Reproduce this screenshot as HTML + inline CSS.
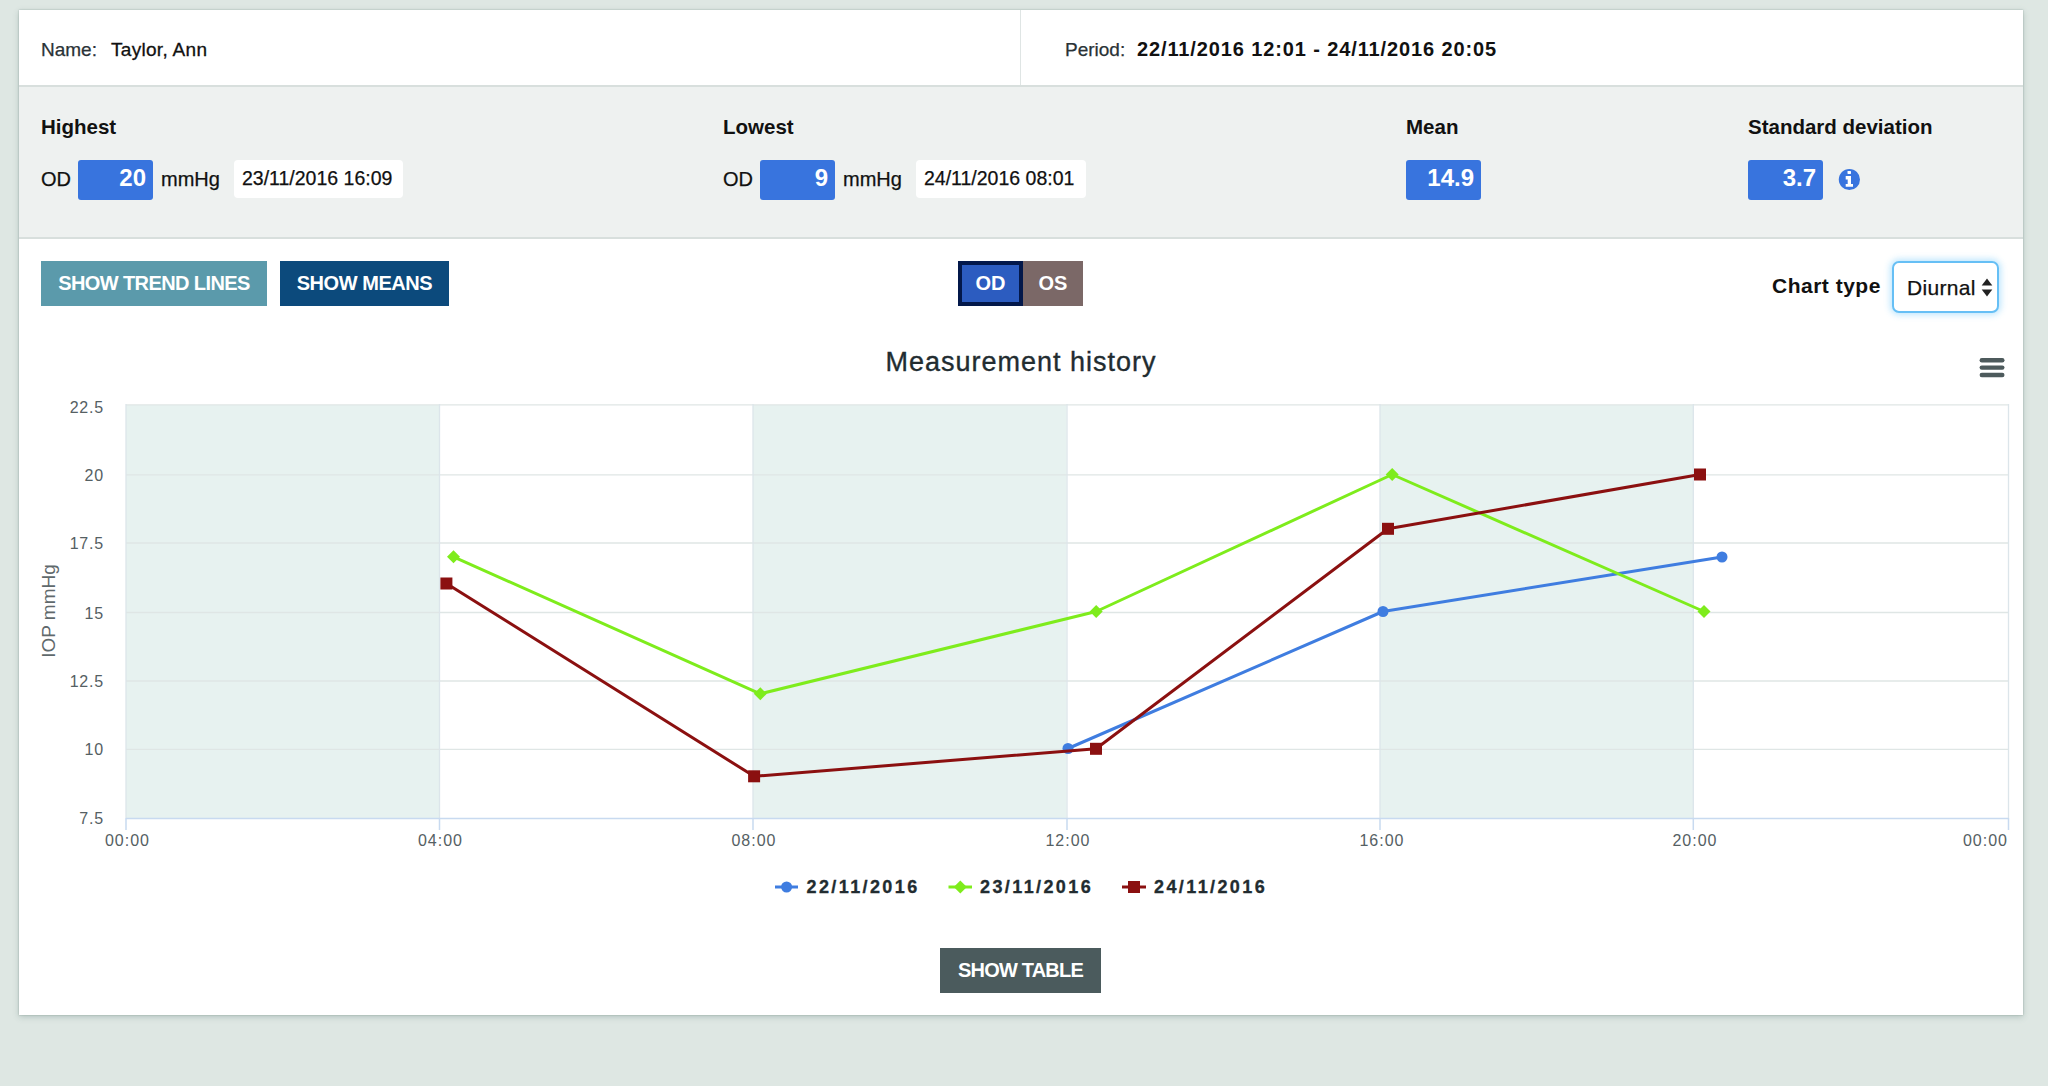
<!DOCTYPE html>
<html><head><meta charset="utf-8">
<style>
html,body{margin:0;padding:0}
body{width:2048px;height:1086px;overflow:hidden;background:#dee7e3;font-family:"Liberation Sans",sans-serif;position:relative}
.card{position:absolute;left:19px;top:10px;width:2004px;height:1005px;background:#fff;box-shadow:0 0 1.5px rgba(50,80,75,.35),0 2px 6px rgba(60,95,90,.25)}
.hdr{position:absolute;left:19px;top:10px;width:2004px;height:75px;background:#fff}
.vdiv{position:absolute;left:1020px;top:10px;width:1px;height:75px;background:#dfe5e4}
.stats{position:absolute;left:19px;top:85px;width:2004px;background:#eef1f0;border-top:2px solid #d8dfdd;border-bottom:2px solid #d8dfdd;box-sizing:border-box;height:154px}
.t{position:absolute;line-height:1;white-space:nowrap;-webkit-text-stroke:.25px currentColor}
.t[style*="bold"]{-webkit-text-stroke:0}
.vbox{position:absolute;background:#3874de;border-radius:3px;height:40px;width:75px}
.dbox{position:absolute;background:#fff;border-radius:4px;height:38.6px;margin-top:.6px}
.btn{position:absolute;height:45px;top:261px}
.w{color:#fff}
</style></head><body>
<div class="card"></div>
<div class="hdr"></div>
<div class="vdiv"></div>
<div class="stats"></div>

<!-- header -->
<div class="t" style="left:41px;top:40px;font-size:19px;color:#2a3236">Name:</div>
<div class="t" style="left:111px;top:40px;font-size:19px;color:#111;-webkit-text-stroke:.3px #111;letter-spacing:.3px">Taylor, Ann</div>
<div class="t" style="left:1065px;top:40px;font-size:19px;color:#2a3236">Period:</div>
<div class="t" style="left:1137px;top:38.8px;font-size:20px;font-weight:bold;color:#111;letter-spacing:.88px">22/11/2016 12:01 - 24/11/2016 20:05</div>

<!-- stats -->
<div class="t" style="left:41px;top:117px;font-size:20.5px;font-weight:bold;color:#111">Highest</div>
<div class="t" style="left:41px;top:169px;font-size:20px;color:#111">OD</div>
<div class="vbox" style="left:78px;top:160px"></div>
<div class="t w" style="left:78px;width:68px;text-align:right;top:165.5px;font-size:24px;font-weight:bold">20</div>
<div class="t" style="left:161px;top:169px;font-size:20px;color:#111">mmHg</div>
<div class="dbox" style="left:234px;top:159px;width:169px"></div>
<div class="t" style="left:242px;top:169.2px;font-size:19.5px;color:#111">23/11/2016 16:09</div>

<div class="t" style="left:723px;top:117px;font-size:20.5px;font-weight:bold;color:#111">Lowest</div>
<div class="t" style="left:723px;top:169px;font-size:20px;color:#111">OD</div>
<div class="vbox" style="left:760px;top:160px"></div>
<div class="t w" style="left:760px;width:68px;text-align:right;top:165.5px;font-size:24px;font-weight:bold">9</div>
<div class="t" style="left:843px;top:169px;font-size:20px;color:#111">mmHg</div>
<div class="dbox" style="left:916px;top:159px;width:170px"></div>
<div class="t" style="left:924px;top:169.2px;font-size:19.5px;color:#111">24/11/2016 08:01</div>

<div class="t" style="left:1406px;top:117px;font-size:20.5px;font-weight:bold;color:#111">Mean</div>
<div class="vbox" style="left:1406px;top:160px"></div>
<div class="t w" style="left:1406px;width:68px;text-align:right;top:165.5px;font-size:24px;font-weight:bold">14.9</div>

<div class="t" style="left:1748px;top:117px;font-size:20.5px;font-weight:bold;color:#111">Standard deviation</div>
<div class="vbox" style="left:1748px;top:160px"></div>
<div class="t w" style="left:1748px;width:68px;text-align:right;top:165.5px;font-size:24px;font-weight:bold">3.7</div>
<svg style="position:absolute;left:1838px;top:168px" width="23" height="23" viewBox="0 0 23 23">
<circle cx="11.4" cy="11.5" r="10.6" fill="#3874de"/>
<rect x="9.5" y="2.9" width="3.5" height="3" rx=".6" fill="#fff"/>
<path d="M7.7 8H13V16H15V18.8H7.7V16H9.7V11.4H7.7z" fill="#fff"/>
</svg>

<!-- controls -->
<div class="btn" style="left:41px;width:226px;background:#5b9aab"></div>
<div class="t w" style="left:41px;width:226px;text-align:center;top:273px;font-size:20px;font-weight:bold;letter-spacing:-.6px">SHOW TREND LINES</div>
<div class="btn" style="left:280px;width:169px;background:#0c4a7c"></div>
<div class="t w" style="left:280px;width:169px;text-align:center;top:273px;font-size:20px;font-weight:bold;letter-spacing:-.45px">SHOW MEANS</div>

<div class="btn" style="left:958px;width:65px;background:#2c5cc0;box-sizing:border-box;border:4px solid #03184a"></div>
<div class="t w" style="left:958px;width:65px;text-align:center;top:273px;font-size:20px;font-weight:bold">OD</div>
<div class="btn" style="left:1023px;width:60px;background:#7b6867"></div>
<div class="t w" style="left:1023px;width:60px;text-align:center;top:273px;font-size:20px;font-weight:bold">OS</div>

<div class="t" style="left:1772px;top:275px;font-size:21px;font-weight:bold;color:#111;letter-spacing:.5px">Chart type</div>
<div style="position:absolute;left:1892px;top:261px;width:107px;height:52px;box-sizing:border-box;border:2px solid #66bff5;border-radius:7px;background:#fff;box-shadow:0 0 6px 2px rgba(110,200,250,.45)"></div>
<div class="t" style="left:1907px;top:277px;font-size:21px;color:#111;letter-spacing:.3px">Diurnal</div>
<svg style="position:absolute;left:1980px;top:277px" width="14" height="22" viewBox="0 0 14 22">
<path d="M7 1.5L12.3 8.5H1.7z" fill="#222"/><path d="M7 19.5L12.3 12.5H1.7z" fill="#222"/>
</svg>

<!-- chart -->
<svg style="position:absolute;left:0;top:0" width="2048" height="1086" viewBox="0 0 2048 1086">
<text x="1021" y="371" text-anchor="middle" font-family="Liberation Sans" font-size="27" fill="#222c30" stroke="#222c30" stroke-width=".35" letter-spacing="1">Measurement history</text>
<g fill="#4d5a5c">
<rect x="1979.6" y="358.1" width="24.9" height="4.4" rx="2.2"/>
<rect x="1979.6" y="365.4" width="24.9" height="4.4" rx="2.2"/>
<rect x="1979.6" y="372.8" width="24.9" height="4.4" rx="2.2"/>
</g>
<!-- plot bands -->
<g fill="#e7f2f0">
<rect x="126" y="405" width="313.5" height="413.5"/>
<rect x="753" y="405" width="313.5" height="413.5"/>
<rect x="1380" y="405" width="313.3" height="413.5"/>
</g>
<!-- grid -->
<g stroke-width="1.3" fill="none">
<path stroke="#dfe6e5" d="M126 404.8H2008.5M126 474.9H2008.5M126 543H2008.5M126 612.5H2008.5M126 681H2008.5M126 749.4H2008.5"/>
<path stroke="#dce5ea" d="M126 404V818M439.5 404V818M753 404V818M1067 404V818M1380 404V818M1693.3 404V818M2008.5 404V818"/>
</g>
<g stroke="#c8daf0" stroke-width="1.5" fill="none">
<path d="M126 818.5H2008.5"/>
<path d="M126 818V830M439.5 818V830M753 818V830M1067 818V830M1380 818V830M1693.3 818V830M2008.5 818V830"/>
</g>
<!-- y labels -->
<g font-family="Liberation Sans" font-size="16" fill="#556063" text-anchor="end" letter-spacing=".8">
<text x="104" y="413">22.5</text>
<text x="104" y="481">20</text>
<text x="104" y="549">17.5</text>
<text x="104" y="619">15</text>
<text x="104" y="687">12.5</text>
<text x="104" y="755">10</text>
<text x="104" y="824">7.5</text>
</g>
<text transform="translate(54.5 611) rotate(-90)" text-anchor="middle" font-family="Liberation Sans" font-size="19" fill="#5f696c">IOP mmHg</text>
<g font-family="Liberation Sans" font-size="16" fill="#556063" text-anchor="middle" letter-spacing="1">
<text x="127.5" y="846.3">00:00</text>
<text x="440.5" y="846.3">04:00</text>
<text x="754" y="846.3">08:00</text>
<text x="1068" y="846.3">12:00</text>
<text x="1382" y="846.3">16:00</text>
<text x="1695" y="846.3">20:00</text>
<text x="1985.5" y="846.3">00:00</text>
</g>
<!-- series -->
<g fill="none" stroke-width="3" stroke-linejoin="round" stroke-linecap="round">
<path d="M1068 748.5L1383 611.5L1722 557" stroke="#3f7de0"/>
</g>
<g fill="#3f7de0"><circle cx="1068" cy="748.5" r="5.5"/><circle cx="1383" cy="611.5" r="5.5"/><circle cx="1722" cy="557" r="5.5"/></g>
<path d="M453.5 556.8L760.3 693.8L1096.2 611.5L1392.2 474.5L1704 611.5" fill="none" stroke="#7eec1c" stroke-width="3" stroke-linejoin="round"/>
<g fill="#7eec1c">
<path d="M453.5 550.3l6.5 6.5l-6.5 6.5l-6.5-6.5z"/>
<path d="M760.3 687.3l6.5 6.5l-6.5 6.5l-6.5-6.5z"/>
<path d="M1096.2 605l6.5 6.5l-6.5 6.5l-6.5-6.5z"/>
<path d="M1392.2 468l6.5 6.5l-6.5 6.5l-6.5-6.5z"/>
<path d="M1704 605l6.5 6.5l-6.5 6.5l-6.5-6.5z"/>
</g>
<path d="M446.4 583.5L754.1 776.3L1096 748.8L1388 528.8L1700 474.5" fill="none" stroke="#8b1010" stroke-width="3" stroke-linejoin="round"/>
<g fill="#8b1010">
<rect x="440.4" y="577.5" width="12" height="12"/>
<rect x="748.1" y="770.3" width="12" height="12"/>
<rect x="1090" y="742.8" width="12" height="12"/>
<rect x="1382" y="522.8" width="12" height="12"/>
<rect x="1694" y="468.5" width="12" height="12"/>
</g>
<!-- legend -->
<g stroke-width="3">
<path d="M775 887H798" stroke="#3f7de0"/>
<path d="M948.5 887H972" stroke="#7eec1c"/>
<path d="M1122 887H1146" stroke="#8b1010"/>
</g>
<circle cx="786.6" cy="887" r="5.5" fill="#3f7de0"/>
<path d="M960.3 880.5l6.5 6.5l-6.5 6.5l-6.5-6.5z" fill="#7eec1c"/>
<rect x="1128" y="881" width="12" height="12" fill="#8b1010"/>
<g font-family="Liberation Sans" font-size="18" font-weight="bold" fill="#222c30" letter-spacing="2.4" stroke="#222c30" stroke-width=".3">
<text x="806.5" y="892.6">22/11/2016</text>
<text x="980" y="892.6">23/11/2016</text>
<text x="1154" y="892.6">24/11/2016</text>
</g>
</svg>

<div class="btn" style="left:940px;top:948px;width:161px;background:#4b5b5d"></div>
<div class="t w" style="left:940px;width:161px;text-align:center;top:960px;font-size:20px;font-weight:bold;letter-spacing:-.8px">SHOW TABLE</div>
</body></html>
